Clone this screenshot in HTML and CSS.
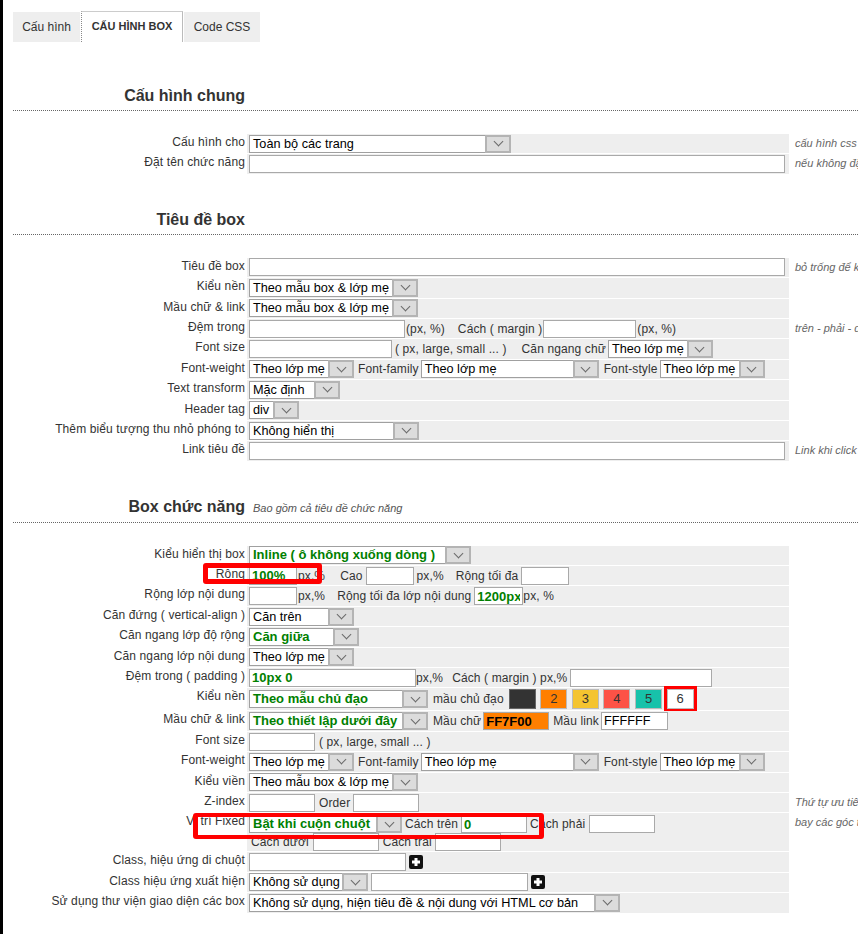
FILE: index.html
```html
<!DOCTYPE html>
<html lang="vi">
<head>
<meta charset="utf-8">
<title>Cấu hình box</title>
<link rel="stylesheet" href="styles.css">
</head>
<body>
<div class="page">
  <div class="tabs">
    <div class="tab tab-1">Cấu hình</div>
    <div class="tab tab-2">CẤU HÌNH BOX</div>
    <div class="tab tab-3">Code CSS</div>
  </div>

  <section class="sec sec-first">
    <h3 class="sec-h"><span class="sec-t">Cấu hình chung</span></h3>
    <div class="form">
      <div class="lb">Cấu hình cho</div>
      <div class="fd"><div class="sel w262"><span class="v">Toàn bộ các trang</span><span class="a"></span></div></div>
      <div class="nt">cấu hình css cho toàn bộ các trang hoặc từng trang</div>

      <div class="lb">Đặt tên chức năng</div>
      <div class="fd"><input class="inp w536" type="text" value=""></div>
      <div class="nt">nếu không đặt tên, hệ thống sẽ tự đặt</div>
    </div>
  </section>

  <section class="sec">
    <h3 class="sec-h"><span class="sec-t">Tiêu đề box</span></h3>
    <div class="form">
      <div class="lb">Tiêu đề box</div>
      <div class="fd"><input class="inp w536" type="text" value=""></div>
      <div class="nt">bỏ trống để không hiển thị tiêu đề</div>

      <div class="lb">Kiểu nền</div>
      <div class="fd"><div class="sel w169"><span class="v">Theo mẫu box &amp; lớp mẹ</span><span class="a"></span></div></div>
      <div class="nt"></div>

      <div class="lb">Mầu chữ &amp; link</div>
      <div class="fd"><div class="sel w169"><span class="v">Theo mẫu box &amp; lớp mẹ</span><span class="a"></span></div></div>
      <div class="nt"></div>

      <div class="lb">Đệm trong</div>
      <div class="fd">
        <input class="inp w156" type="text" value="">
        <span class="t ml1">(px, %)</span>
        <span class="t ml13">Cách ( margin )</span>
        <input class="inp w93 ml1" type="text" value="">
        <span class="t ml1">(px, %)</span>
      </div>
      <div class="nt">trên - phải - dưới - trái</div>

      <div class="lb">Font size</div>
      <div class="fd">
        <input class="inp w143" type="text" value="">
        <span class="t ml3">( px, large, small ... )</span>
        <span class="t ml15">Căn ngang chữ</span>
        <div class="sel w105 ml2"><span class="v">Theo lớp mẹ</span><span class="a"></span></div>
      </div>
      <div class="nt"></div>

      <div class="lb">Font-weight</div>
      <div class="fd">
        <div class="sel w105"><span class="v">Theo lớp mẹ</span><span class="a"></span></div>
        <span class="t ml4">Font-family</span>
        <div class="sel w178 ml2"><span class="v">Theo lớp mẹ</span><span class="a"></span></div>
        <span class="t ml5">Font-style</span>
        <div class="sel w105 ml2"><span class="v">Theo lớp mẹ</span><span class="a"></span></div>
      </div>
      <div class="nt"></div>

      <div class="lb">Text transform</div>
      <div class="fd"><div class="sel w91"><span class="v">Mặc định</span><span class="a"></span></div></div>
      <div class="nt"></div>

      <div class="lb">Header tag</div>
      <div class="fd"><div class="sel w50"><span class="v">div</span><span class="a"></span></div></div>
      <div class="nt"></div>

      <div class="lb">Thêm biểu tượng thu nhỏ phóng to</div>
      <div class="fd"><div class="sel w170"><span class="v">Không hiển thị</span><span class="a"></span></div></div>
      <div class="nt"></div>

      <div class="lb">Link tiêu đề</div>
      <div class="fd"><input class="inp w536" type="text" value=""></div>
      <div class="nt">Link khi click vào tiêu đề</div>
    </div>
  </section>

  <section class="sec">
    <h3 class="sec-h"><span class="sec-t">Box chức năng</span><span class="sec-n">Bao gồm cả tiêu đề chức năng</span></h3>
    <div class="form">
      <div class="lb">Kiểu hiển thị box</div>
      <div class="fd"><div class="sel w222 g"><span class="v">Inline ( ô không xuống dòng )</span><span class="a"></span></div></div>
      <div class="nt"></div>

      <div class="lb anchor">Rộng<span class="ann ann-w"></span></div>
      <div class="fd">
        <input class="inp w48 g" type="text" value="100%">
        <span class="t ml1">px,%</span>
        <span class="t ml15">Cao</span>
        <input class="inp w48 ml3" type="text" value="">
        <span class="t ml3">px,%</span>
        <span class="t ml12">Rộng tối đa</span>
        <input class="inp w48 ml3" type="text" value="">
      </div>
      <div class="nt"></div>

      <div class="lb">Rộng lớp nội dung</div>
      <div class="fd">
        <input class="inp w48" type="text" value="">
        <span class="t ml1">px,%</span>
        <span class="t ml12">Rộng tối đa lớp nội dung</span>
        <input class="inp w49 g ml3" type="text" value="1200px">
        <span class="t">px, %</span>
      </div>
      <div class="nt"></div>

      <div class="lb">Căn đứng ( vertical-align )</div>
      <div class="fd"><div class="sel w105"><span class="v">Căn trên</span><span class="a"></span></div></div>
      <div class="nt"></div>

      <div class="lb">Căn ngang lớp độ rộng</div>
      <div class="fd"><div class="sel w110 g"><span class="v">Căn giữa</span><span class="a"></span></div></div>
      <div class="nt"></div>

      <div class="lb">Căn ngang lớp nội dung</div>
      <div class="fd"><div class="sel w105"><span class="v">Theo lớp mẹ</span><span class="a"></span></div></div>
      <div class="nt"></div>

      <div class="lb">Đệm trong ( padding )</div>
      <div class="fd">
        <input class="inp w167 g" type="text" value="10px 0">
        <span class="t">px,%</span>
        <span class="t ml9">Cách ( margin ) px,%</span>
        <input class="inp w142 ml3" type="text" value="">
      </div>
      <div class="nt"></div>

      <div class="lb">Kiểu nền</div>
      <div class="fd fd-sw">
        <div class="sel w179 g"><span class="v">Theo mẫu chủ đạo</span><span class="a"></span></div>
        <span class="t ml5">mầu chủ đạo</span>
        <div class="swatches ml5">
          <span class="sw sw-1"></span>
          <span class="sw sw-2">2</span>
          <span class="sw sw-3">3</span>
          <span class="sw sw-4">4</span>
          <span class="sw sw-5">5</span>
          <span class="sw sw-6 picked">6</span>
        </div>
      </div>
      <div class="nt"></div>

      <div class="lb">Mầu chữ &amp; link</div>
      <div class="fd">
        <div class="sel w179 g"><span class="v">Theo thiết lập dưới đây</span><span class="a"></span></div>
        <span class="t ml5">Mầu chữ</span>
        <input class="inp w66 orange ml2" type="text" value="FF7F00">
        <span class="t ml4">Mầu link</span>
        <input class="inp w67 ml2" type="text" value="FFFFFF">
      </div>
      <div class="nt"></div>

      <div class="lb">Font size</div>
      <div class="fd">
        <input class="inp w66" type="text" value="">
        <span class="t ml4">( px, large, small ... )</span>
      </div>
      <div class="nt"></div>

      <div class="lb">Font-weight</div>
      <div class="fd">
        <div class="sel w105"><span class="v">Theo lớp mẹ</span><span class="a"></span></div>
        <span class="t ml4">Font-family</span>
        <div class="sel w178 ml2"><span class="v">Theo lớp mẹ</span><span class="a"></span></div>
        <span class="t ml5">Font-style</span>
        <div class="sel w105 ml2"><span class="v">Theo lớp mẹ</span><span class="a"></span></div>
      </div>
      <div class="nt"></div>

      <div class="lb">Kiểu viền</div>
      <div class="fd"><div class="sel w169"><span class="v">Theo mẫu box &amp; lớp mẹ</span><span class="a"></span></div></div>
      <div class="nt"></div>

      <div class="lb">Z-index</div>
      <div class="fd">
        <input class="inp w66" type="text" value="">
        <span class="t ml4">Order</span>
        <input class="inp w66 ml3" type="text" value="">
      </div>
      <div class="nt">Thứ tự ưu tiên hiển thị</div>

      <div class="lb anchor">Vị trí Fixed<span class="ann ann-fix"></span></div>
      <div class="fd fd-two">
        <div class="line">
          <div class="sel w153 g"><span class="v">Bật khi cuộn chuột</span><span class="a"></span></div>
          <span class="t ml3">Cách trên</span>
          <input class="inp w66 g ml3" type="text" value="0">
          <span class="t ml3">Cách phải</span>
          <input class="inp w66 ml4" type="text" value="">
        </div>
        <div class="line">
          <span class="t ml2">Cách dưới</span>
          <input class="inp w66 ml4" type="text" value="">
          <span class="t ml4">Cách trái</span>
          <input class="inp w66 ml3" type="text" value="">
        </div>
      </div>
      <div class="nt">bay các góc trên màn hình</div>

      <div class="lb">Class, hiệu ứng di chuột</div>
      <div class="fd">
        <input class="inp w157" type="text" value="">
        <svg class="plus ml3" width="14" height="14" viewBox="0 0 14 14"><rect width="14" height="14" rx="2" fill="#111"/><path d="M7 3v8M3 7h8" stroke="#fff" stroke-width="3"/></svg>
      </div>
      <div class="nt"></div>

      <div class="lb">Class hiệu ứng xuất hiện</div>
      <div class="fd">
        <div class="sel w119"><span class="v">Không sử dụng</span><span class="a"></span></div>
        <input class="inp w157 ml3" type="text" value="">
        <svg class="plus ml3" width="14" height="14" viewBox="0 0 14 14"><rect width="14" height="14" rx="2" fill="#111"/><path d="M7 3v8M3 7h8" stroke="#fff" stroke-width="3"/></svg>
      </div>
      <div class="nt"></div>

      <div class="lb">Sử dụng thư viện giao diện các box</div>
      <div class="fd"><div class="sel w371"><span class="v">Không sử dụng, hiện tiêu đề &amp; nội dung với HTML cơ bản</span><span class="a"></span></div></div>
      <div class="nt"></div>
    </div>
  </section>
</div>
</body>
</html>
```

FILE: styles.css
```css
* { box-sizing: border-box; }

html, body {
  margin: 0;
  padding: 0;
  overflow: hidden;
  background: #fff;
}

body {
  font-family: "Liberation Sans", Arial, sans-serif;
  font-size: 12px;
  color: #333;
}

.page {
  position: relative;
  width: 1100px;
  min-height: 934px;
  border-left: 3px solid #000;
  padding: 11px 0 0 10px;
}

/* Tabs */
.tabs {
  display: flex;
  align-items: flex-end;
  height: 31px;
}

.tab {
  height: 30px;
  line-height: 30px;
  background: #eee;
  text-align: center;
  color: #333;
  font-size: 12px;
}

.tab-1 { width: 67px; margin-right: 1px; }

.tab-2 {
  width: 102px;
  height: 31px;
  line-height: 29px;
  background: #fff;
  border-top: 1px solid #ccc;
  border-left: 1px dotted #888;
  border-right: 1px solid #bbb;
  font-weight: bold;
  font-size: 11px;
  margin-right: 1px;
}

.tab-3 { width: 76px; }

/* Sections */
.sec { margin-top: 36px; }
.sec-first { margin-top: 44px; }

.sec-h {
  margin: 0;
  display: flex;
  align-items: baseline;
  font-size: 16px;
  line-height: 20px;
  font-weight: bold;
  color: #333;
  padding-bottom: 4px;
  border-bottom: 1px dotted #666;
}

.sec-t {
  width: 232px;
  text-align: right;
  flex: none;
}

.sec-n {
  margin-left: 8px;
  font-size: 11px;
  font-style: italic;
  font-weight: normal;
  color: #555;
}

/* Form grid */
.form {
  display: grid;
  grid-template-columns: 234px 542px 1fr;
  grid-auto-rows: minmax(19.4px, auto);
  row-gap: 1px;
  margin-top: 23px;
}

.lb {
  text-align: right;
  padding-right: 2px;
  line-height: 16px;
  color: #333;
  white-space: nowrap;
  letter-spacing: 0.12px;
}

.anchor { position: relative; }

.fd {
  background: #eee;
  display: flex;
  align-items: center;
  padding-left: 2px;
  white-space: nowrap;
}

.fd-sw { padding-top: 1px; padding-bottom: 1px; }

.fd-two {
  flex-direction: column;
  align-items: flex-start;
  padding-top: 2px;
}

.line {
  display: flex;
  align-items: center;
  height: 18px;
}

.nt {
  padding-left: 6px;
  padding-top: 1px;
  font-size: 11px;
  font-style: italic;
  color: #666;
  line-height: 16px;
  white-space: nowrap;
  overflow: hidden;
}

.t {
  font-size: 12px;
  line-height: 16px;
  color: #333;
  flex: none;
  letter-spacing: 0.12px;
}

/* Controls */
.inp {
  height: 18px;
  border: 1px solid #a9a9a9;
  border-radius: 0;
  background: #fff;
  font: 12.7px "Liberation Sans", Arial, sans-serif;
  color: #000;
  padding: 0 2px;
  margin-top: 0;
  margin-bottom: 0;
  margin-right: 0;
  flex: none;
  outline: none;
}

.inp.g { color: #008000; font-weight: bold; font-size: 13px; }
.inp.orange { background: #ff7f00; color: #000; font-weight: bold; font-size: 13px; }

.sel {
  height: 18px;
  display: flex;
  border: 1px solid #a0a0a0;
  background: #fff;
  flex: none;
}

.sel .v {
  flex: 1;
  min-width: 0;
  padding-left: 3px;
  font-size: 12.7px;
  line-height: 16px;
  color: #000;
  white-space: nowrap;
  overflow: hidden;
}

.sel.g .v { color: #008000; font-weight: bold; font-size: 13px; }

.sel .a {
  width: 26px;
  flex: none;
  margin: -1px -1px -1px 0;
  background: #dcdcdc;
  border: 2px solid #b4b4b4;
  display: flex;
  align-items: center;
  justify-content: center;
}

.sel .a::after {
  content: "";
  width: 6px;
  height: 6px;
  border-right: 1px solid #6a6a6a;
  border-bottom: 1px solid #6a6a6a;
  transform: rotate(45deg);
  margin-top: -4px;
}

/* Swatches */
.swatches {
  display: flex;
  gap: 4.6px;
}

.sw {
  width: 27px;
  height: 20px;
  border: 1px solid #bbb;
  font-size: 13px;
  line-height: 18px;
  text-align: center;
  color: #333;
}

.sw-1 { background: #333; border-color: #666; }
.sw-2 { background: #ff7f00; }
.sw-3 { background: #f4c430; }
.sw-4 { background: #fd5246; }
.sw-5 { background: #17c2aa; }
.sw-6 { background: #fff; }
.picked { outline: 3px solid #f00; }

.plus { flex: none; display: block; }

/* Annotation frames */
.ann {
  position: absolute;
  border: 5px solid #f00;
  border-radius: 3px;
  pointer-events: none;
}

.ann-w { left: 190px; top: -3px; width: 119px; height: 21px; }
.ann-fix { left: 180px; top: 0; width: 351px; height: 26px; border-width: 4px 5px; }

/* widths */
.w48 { width: 48px; }
.w49 { width: 49px; }
.w50 { width: 50px; }
.w66 { width: 66px; }
.w67 { width: 67px; }
.w91 { width: 91px; }
.w93 { width: 93px; }
.w105 { width: 105px; }
.w110 { width: 110px; }
.w119 { width: 119px; }
.w142 { width: 142px; }
.w143 { width: 143px; }
.w153 { width: 153px; }
.w156 { width: 156px; }
.w157 { width: 157px; }
.w167 { width: 167px; }
.w169 { width: 169px; }
.w170 { width: 170px; }
.w178 { width: 178px; }
.w179 { width: 179px; }
.w222 { width: 222px; }
.w262 { width: 262px; }
.w371 { width: 371px; }
.w536 { width: 536px; }

/* spacing */
.ml1 { margin-left: 1px; }
.ml2 { margin-left: 2px; }
.ml3 { margin-left: 3px; }
.ml4 { margin-left: 4px; }
.ml5 { margin-left: 5px; }
.ml7 { margin-left: 7px; }
.ml9 { margin-left: 9px; }
.ml12 { margin-left: 12px; }
.ml13 { margin-left: 13px; }
.ml14 { margin-left: 14px; }
.ml15 { margin-left: 15px; }
.ml16 { margin-left: 16px; }
```
